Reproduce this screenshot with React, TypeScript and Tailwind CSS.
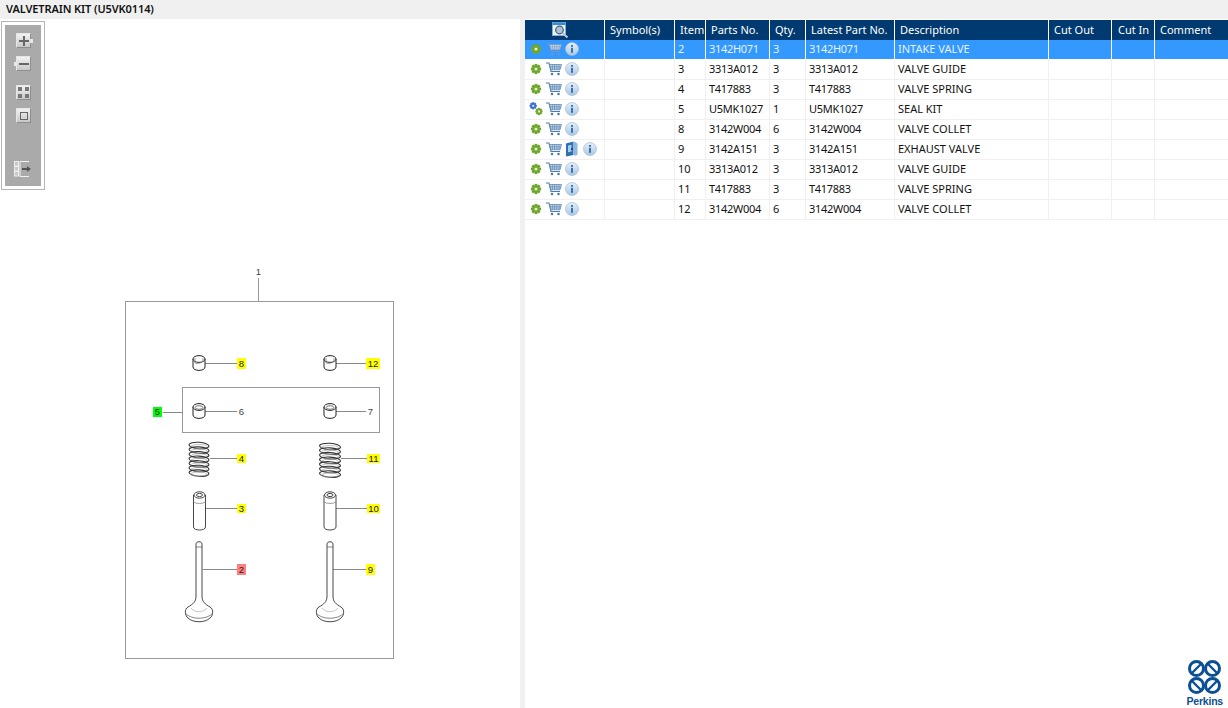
import { Fragment } from "react";

const rows = [
  { item: "2", part: "3142H071", qty: "3", latest: "3142H071", desc: "INTAKE VALVE", selected: true },
  { item: "3", part: "3313A012", qty: "3", latest: "3313A012", desc: "VALVE GUIDE" },
  { item: "4", part: "T417883", qty: "3", latest: "T417883", desc: "VALVE SPRING" },
  { item: "5", part: "U5MK1027", qty: "1", latest: "U5MK1027", desc: "SEAL KIT", kit: true },
  { item: "8", part: "3142W004", qty: "6", latest: "3142W004", desc: "VALVE COLLET" },
  { item: "9", part: "3142A151", qty: "3", latest: "3142A151", desc: "EXHAUST VALVE", book: true },
  { item: "10", part: "3313A012", qty: "3", latest: "3313A012", desc: "VALVE GUIDE" },
  { item: "11", part: "T417883", qty: "3", latest: "T417883", desc: "VALVE SPRING" },
  { item: "12", part: "3142W004", qty: "6", latest: "3142W004", desc: "VALVE COLLET" },
];

const headers = [
  { label: "Symbol(s)", w: "w-[70px] pl-[5px]" },
  { label: "Item", w: "w-[31px] pl-[5px]" },
  { label: "Parts No.", w: "w-[64px] pl-[5px]" },
  { label: "Qty.", w: "w-[36px] pl-[5px]" },
  { label: "Latest Part No.", w: "w-[89px] pl-[5px]" },
  { label: "Description", w: "w-[154px] pl-[5px]" },
  { label: "Cut Out", w: "w-[63px] pl-[5px]" },
  { label: "Cut In", w: "w-[43px] pl-[6px]" },
  { label: "Comment", w: "w-[73px] pl-[5px]" },
];

const callouts = [
  { n: "8", box: "left-[237px] top-[339px] w-[9px] h-[11px] bg-[#ffff00]" },
  { n: "12", box: "left-[366px] top-[339px] w-[14px] h-[11px] bg-[#ffff00]" },
  { n: "5", box: "left-[153px] top-[388px] w-[9px] h-[10px] bg-[#00ff00]" },
  { n: "6", box: "left-[237px] top-[387px] w-[9px] h-[11px] text-[#444]" },
  { n: "7", box: "left-[366px] top-[387px] w-[9px] h-[11px] text-[#444]" },
  { n: "4", box: "left-[237px] top-[435px] w-[9px] h-[9px] bg-[#ffff00]" },
  { n: "11", box: "left-[367px] top-[435px] w-[13px] h-[9px] bg-[#ffff00]" },
  { n: "3", box: "left-[237px] top-[485px] w-[9px] h-[9px] bg-[#ffff00]" },
  { n: "10", box: "left-[367px] top-[485px] w-[13px] h-[9px] bg-[#ffff00]" },
  { n: "2", box: "left-[237px] top-[545px] w-[9px] h-[11px] bg-[#ff7f7f]" },
  { n: "9", box: "left-[366px] top-[545px] w-[9px] h-[11px] bg-[#ffff00]" },
  { n: "1", box: "left-[254px] top-[247px] w-[9px] h-[11px] text-[#444]" },
];

const leaders = [
  [205, 237, 363],
  [336, 366, 363],
  [163, 182, 412],
  [205, 237, 411],
  [336, 366, 411],
  [210, 237, 458],
  [341, 367, 458],
  [206, 237, 508],
  [336, 367, 508],
  [203, 237, 569],
  [333, 366, 569],
];

function Gear({ cx, cy, r, fill, hub }: { cx: number; cy: number; r: number; fill: string; hub: string }) {
  return (
    <g>
      {[0, 45, 90, 135].map((a) => (
        <rect
          key={a}
          x={cx - r * 0.36}
          y={cy - r * 1.35}
          width={r * 0.72}
          height={r * 2.7}
          fill={fill}
          transform={`rotate(${a} ${cx} ${cy})`}
        />
      ))}
      <circle cx={cx} cy={cy} r={r} fill={fill} />
      <circle cx={cx} cy={cy} r={r * 0.42} fill={hub} />
    </g>
  );
}

function GearIcon({ kit }: { kit?: boolean }) {
  return (
    <svg width="14" height="14" viewBox="0 0 14 14">
      {kit ? (
        <>
          <Gear cx={4.2} cy={3.8} r={2.7} fill="#3b6fd0" hub="#dbe6fa" />
          <Gear cx={10} cy={9.5} r={2.7} fill="#6ea52c" hub="#e8f2d0" />
        </>
      ) : (
        <Gear cx={7} cy={7} r={3.8} fill="#6fa62e" hub="#e3efc8" />
      )}
    </svg>
  );
}

function CartIcon({ dim }: { dim?: boolean }) {
  const c = dim ? "#6f96c6" : "#4e7cab";
  return (
    <svg width="16" height="14" viewBox="0 0 16 14" fill="none">
      <path d="M0 1H3L5 9.5H14" stroke={c} strokeWidth="1.1" />
      <path d="M3.6 2.5H15.5L14 7.8H4.8Z" fill="#d9e4f0" stroke={c} strokeWidth="0.7" />
      <path d="M4 4.3H15M4.4 6H14.6M6.4 2.5V7.8M8.6 2.5V7.8M10.8 2.5V7.8M13 2.5V7.8" stroke={c} strokeWidth="0.6" />
      <circle cx="6" cy="12" r="1.3" fill={c} />
      <circle cx="12.5" cy="12" r="1.3" fill={c} />
    </svg>
  );
}

function InfoIcon() {
  return (
    <svg width="14" height="14" viewBox="0 0 14 14">
      <defs>
        <linearGradient id="infoFill" x1="0" y1="0" x2="0" y2="1">
          <stop offset="0" stopColor="#e8f0f8" />
          <stop offset="1" stopColor="#a9c8e4" />
        </linearGradient>
      </defs>
      <circle cx="7" cy="7" r="6.5" fill="url(#infoFill)" stroke="#a3bcd4" strokeWidth="0.7" />
      <rect x="6" y="3" width="2" height="1.8" fill="#3a73aa" />
      <rect x="6" y="5.8" width="2" height="5" fill="#3a73aa" />
    </svg>
  );
}

function BookIcon() {
  return (
    <svg width="13" height="16" viewBox="0 0 13 16">
      <path d="M1 2.5L8.5 0.5V14L1 15.5Z" fill="#2f6fb3" />
      <path d="M8.5 0.5C11 1 12.5 2 12.5 3.5V13C12.5 14.5 10.5 15 8.5 14Z" fill="#8db9e0" />
      <path d="M3 4.5L6.5 3.7V10.5L3 11.3Z" fill="#a9cdec" />
      <circle cx="6.8" cy="8" r="1" fill="#123f70" />
    </svg>
  );
}

function SearchWindowIcon() {
  return (
    <svg width="17" height="17" viewBox="0 0 17 17" fill="none">
      <rect x="0.5" y="0.5" width="13" height="13" fill="#eaf2fa" stroke="#7fb0dc" />
      <rect x="0.5" y="0.5" width="13" height="2.5" fill="#3a8ad0" />
      <circle cx="7.5" cy="8" r="3.8" fill="#a8c4d8" stroke="#4a5a68" strokeWidth="1.2" />
      <path d="M10.5 11L15.5 15.5" stroke="#b8c8d8" strokeWidth="2.2" />
    </svg>
  );
}

function ToolButton({ children }: { children: React.ReactNode }) {
  return (
    <div className="relative w-[15px] h-[15px] bg-gradient-to-b from-[#f2f2f2] to-[#c8c8c8] border border-[#8e8e8e] border-t-[#e6e6e6] border-l-[#e6e6e6] flex items-center justify-center">
      {children}
    </div>
  );
}

function Cap({ cx, cy, open }: { cx: number; cy: number; open?: boolean }) {
  return (
    <g fill="white" stroke="#222" strokeWidth="1">
      <path d={`M${cx - 6} ${cy - 4}V${cy + 4}C${cx - 6} ${cy + 8.5} ${cx + 6} ${cy + 8.5} ${cx + 6} ${cy + 4}V${cy - 4}`} />
      <ellipse cx={cx} cy={cy - 4} rx="6" ry="3.4" />
      {open ? (
        <path d={`M${cx - 4} ${cy - 5}V${cy}C${cx - 2} ${cy + 1} ${cx + 3} ${cy} ${cx + 4} ${cy - 2}V${cy - 5}`} fill="none" stroke="#777" strokeWidth="0.7" />
      ) : (
        <ellipse cx={cx} cy={cy - 3.5} rx="3.8" ry="1.8" stroke="#555" strokeWidth="0.8" />
      )}
    </g>
  );
}

function Spring({ cx, top, rx }: { cx: number; top: number; rx: number }) {
  return (
    <g fill="none" stroke="#333" strokeWidth="1.1">
      {[0, 1, 2, 3, 4, 5, 6].map((i) => (
        <Fragment key={i}>
          <ellipse cx={cx} cy={top + 3.5 + i * 4.6} rx={rx} ry="3.2" transform={`rotate(4 ${cx} ${top + 3.5 + i * 4.6})`} />
          <ellipse cx={cx} cy={top + 4.5 + i * 4.6} rx={rx - 2} ry="2" stroke="#999" strokeWidth="0.6" />
        </Fragment>
      ))}
    </g>
  );
}

function Guide({ cx, top }: { cx: number; top: number }) {
  return (
    <g fill="white" stroke="#333" strokeWidth="0.9">
      <path d={`M${cx - 6} ${top + 4}V${top + 36}C${cx - 6} ${top + 40} ${cx + 6} ${top + 40} ${cx + 6} ${top + 36}V${top + 4}`} />
      <path d={`M${cx - 6} ${top + 11}C${cx - 3} ${top + 13} ${cx + 3} ${top + 13} ${cx + 6} ${top + 11}`} stroke="#777" strokeWidth="0.7" fill="none" />
      <ellipse cx={cx} cy={top + 4} rx="5.5" ry="3.2" />
      <ellipse cx={cx} cy={top + 4} rx="3" ry="1.6" />
    </g>
  );
}

function Valve({ cx, top, rx }: { cx: number; top: number; rx: number }) {
  return (
    <g fill="white" stroke="#333" strokeWidth="0.9">
      <path d={`M${cx - 3} ${top + 2}V${top + 54}C${cx - 3} ${top + 60} ${cx - 6} ${top + 62} ${cx - rx + 3} ${top + 65}C${cx - rx - 1} ${top + 67} ${cx - rx} ${top + 74} ${cx - rx + 3} ${top + 76}C${cx - 6} ${top + 81} ${cx + 6} ${top + 81} ${cx + rx - 3} ${top + 76}C${cx + rx} ${top + 74} ${cx + rx + 1} ${top + 67} ${cx + rx - 3} ${top + 65}C${cx + 6} ${top + 62} ${cx + 3} ${top + 60} ${cx + 3} ${top + 54}V${top + 2}C${cx + 3} ${top - 1} ${cx - 3} ${top - 1} ${cx - 3} ${top + 2}Z`} />
      <path d={`M${cx - 3} ${top + 5}H${cx + 3}`} stroke="#555" strokeWidth="0.7" fill="none" />
      <path d={`M${cx - rx} ${top + 71}C${cx - 8} ${top + 78} ${cx + 8} ${top + 78} ${cx + rx} ${top + 71}`} stroke="#555" strokeWidth="0.7" fill="none" />
      <path d={`M${cx - 8} ${top + 66}C${cx - 4} ${top + 71} ${cx + 4} ${top + 71} ${cx + 8} ${top + 66}`} stroke="#aaa" strokeWidth="0.7" fill="none" />
    </g>
  );
}

function PerkinsLogo() {
  const blue = "#0b4f94";
  return (
    <div className="flex flex-col items-center">
      <svg width="33" height="34" viewBox="0 0 33 34" fill="none" stroke={blue} strokeWidth="3">
        <circle cx="8.5" cy="8.5" r="7" />
        <circle cx="24.5" cy="8.5" r="7" />
        <circle cx="8.5" cy="25.5" r="7" />
        <circle cx="24.5" cy="25.5" r="7" />
        <path d="M4 13L13 4M20 4L29 13M4 21L13 30M29 21L20 30" strokeWidth="2.4" />
      </svg>
      <span className="mt-[2px] font-['Liberation_Sans',sans-serif] font-bold text-[10.5px] leading-[10px] text-[#0b4f94] tracking-[-0.2px]">
        Perkins
      </span>
    </div>
  );
}

export default function App() {
  return (
    <div className="w-[1228px] h-[708px] bg-white flex flex-col overflow-hidden font-['Noto_Sans',sans-serif] text-[11px] text-[#111]">
      <div className="h-[19px] shrink-0 bg-[#f0f0f0] pl-[6px] font-semibold leading-[18px] tracking-[-0.1px]">
        VALVETRAIN KIT (U5VK0114)
      </div>

      <div className="flex flex-1 min-h-0">
        <div className="relative w-[520px] shrink-0">
          <div className="absolute left-[1px] top-[2px] w-[44px] h-[169px] border border-[#b5b5b5] p-[3px]">
            <div className="h-full bg-[#aaaaaa] flex flex-col items-center pt-[8px] pl-[1px]">
              <ToolButton>
                <span className="block relative w-[10px] h-[10px] bg-[linear-gradient(#666,#666)] bg-no-repeat bg-center bg-[length:10px_2px]">
                  <span className="absolute left-[4px] top-0 w-[2px] h-[10px] bg-[#666]" />
                </span>
                <span className="absolute right-[-3px] top-[5px] w-[3px] h-[4px] bg-[#e8e8e8]" />
              </ToolButton>
              <div className="mt-[8px]">
                <ToolButton>
                  <span className="block w-[10px] h-[2px] bg-[#666]" />
                  <span className="absolute left-[-3px] top-[5px] w-[3px] h-[4px] bg-[#e8e8e8]" />
                </ToolButton>
              </div>
              <div className="mt-[14px]">
                <ToolButton>
                  <span className="grid grid-cols-2 gap-[3px]">
                    <span className="w-[4px] h-[4px] bg-[#777]" />
                    <span className="w-[4px] h-[4px] bg-[#777]" />
                    <span className="w-[4px] h-[4px] bg-[#777]" />
                    <span className="w-[4px] h-[4px] bg-[#777]" />
                  </span>
                </ToolButton>
              </div>
              <div className="mt-[8px]">
                <ToolButton>
                  <span className="block w-[8px] h-[8px] border border-[#666]" />
                </ToolButton>
              </div>
              <svg className="mt-[38px] -ml-[2px]" width="18" height="16" viewBox="0 0 18 16">
                <rect x="0.5" y="0.5" width="4" height="4.5" fill="#c8c8c8" stroke="#eee" />
                <rect x="0.5" y="5.5" width="4" height="4.5" fill="#c8c8c8" stroke="#eee" />
                <rect x="0.5" y="10.5" width="4" height="4.5" fill="#c8c8c8" stroke="#eee" />
                <path d="M6 0.5H15M6 15.5H15M6 0.5V15.5" stroke="#f2f2f2" fill="none" />
                <path d="M8 8H14" stroke="#555" strokeWidth="2" />
                <path d="M13 5L17 8L13 11Z" fill="#555" />
              </svg>
            </div>
          </div>

          <svg className="absolute left-0 top-0" width="520" height="689" viewBox="0 19 520 689" fill="none">
            <path d="M258.5 278V301" stroke="#999" />
            <rect x="125.5" y="301.5" width="268" height="357" stroke="#999" />
            <rect x="182.5" y="387.5" width="197" height="45" stroke="#999" />
            {leaders.map(([a, b, y], i) => (
              <path key={i} d={`M${a} ${y + 0.5}H${b}`} stroke="#888" />
            ))}
            <Cap cx={199} cy={363} open />
            <Cap cx={330} cy={363} open />
            <Cap cx={199} cy={411} />
            <Cap cx={330} cy={411} />
            <Spring cx={199} top={442} rx={10} />
            <Spring cx={330} top={443} rx={10.5} />
            <Guide cx={199.5} top={491} />
            <Guide cx={330} top={491} />
            <Valve cx={199} top={542} rx={14} />
            <Valve cx={330} top={542} rx={14} />
          </svg>

          {callouts.map((c) => (
            <div
              key={c.n}
              className={`absolute flex items-center justify-center font-['Liberation_Sans',sans-serif] text-[9.5px] leading-none text-[#222] ${c.box}`}
            >
              {c.n}
            </div>
          ))}
        </div>

        <div className="w-[5px] shrink-0 bg-[#f0f0f0]" />

        <div className="relative flex-1 pt-[1px]">
          <div className="flex h-[20px] bg-[#003a70] text-white">
            <div className="w-[80px] border-r border-white flex items-center justify-center pr-[8px]">
              <SearchWindowIcon />
            </div>
            {headers.map((h) => (
              <div key={h.label} className={`${h.w} border-r border-white last:border-r-0 leading-[20px] whitespace-nowrap overflow-hidden`}>
                {h.label}
              </div>
            ))}
          </div>

          {rows.map((r) => {
            const cell = `border-r ${r.selected ? "border-white" : "border-[#f0f0f0]"} pl-[3px] leading-[18px] whitespace-nowrap`;
            const code = "tracking-[-0.3px]";
            return (
              <div
                key={r.item}
                className={`flex h-[20px] border-b ${r.selected ? "border-white bg-[#3399ff] text-[#e6f2ff]" : "border-[#f0f0f0]"}`}
              >
                <div className={`w-[80px] border-r ${r.selected ? "border-white" : "border-[#f0f0f0]"} flex items-center pl-[4px] pb-[1px] gap-[3px]`}>
                  <GearIcon kit={r.kit} />
                  <CartIcon dim={r.selected} />
                  {r.book && <BookIcon />}
                  <div className={r.book ? "ml-[2px]" : ""}>
                    <InfoIcon />
                  </div>
                </div>
                <div className={`w-[70px] ${cell}`} />
                <div className={`w-[31px] ${cell}`}>{r.item}</div>
                <div className={`w-[64px] ${cell} ${code}`}>{r.part}</div>
                <div className={`w-[36px] ${cell}`}>{r.qty}</div>
                <div className={`w-[89px] ${cell} ${code}`}>{r.latest}</div>
                <div className={`w-[154px] ${cell}`}>{r.desc}</div>
                <div className={`w-[63px] ${cell}`} />
                <div className={`w-[43px] ${cell}`} />
                <div className="w-[73px]" />
              </div>
            );
          })}

          <div className="absolute right-[5px] bottom-[2px]">
            <PerkinsLogo />
          </div>
        </div>
      </div>
    </div>
  );
}
